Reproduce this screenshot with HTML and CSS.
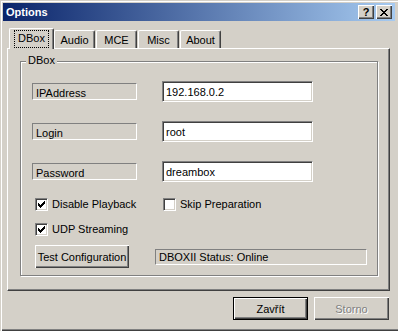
FILE: index.html
```html
<!DOCTYPE html>
<html lang="en">
<head>
    <meta charset="UTF-8">
    <title>Options</title>
    <link rel="stylesheet" href="styles.css">
</head>
<body>

    <div class="window">
        <div class="titlebar">
            <span class="title">Options</span>
            <div class="caption-buttons">
                <span class="caption-btn help">?</span>
                <span class="caption-btn">
                    <svg width="8" height="7" viewBox="0 0 8 7" shape-rendering="crispEdges">
                        <path fill="#000" d="M0 0h2v1H0z M6 0h2v1H6z M1 1h2v1H1z M5 1h2v1H5z M2 2h4v1H2z M3 3h2v1H3z M2 4h4v1H2z M1 5h2v1H1z M5 5h2v1H5z M0 6h2v1H0z M6 6h2v1H6z"/>
                    </svg>
                </span>
            </div>
        </div>

        <div class="content">
            <div class="tabs">
                <div class="tab active"><span class="focus">DBox</span></div>
                <div class="tab">Audio</div>
                <div class="tab">MCE</div>
                <div class="tab">Misc</div>
                <div class="tab">About</div>
            </div>

            <div class="panel">
                <div class="group">
                    <span class="group-title">DBox</span>

                    <div class="field-row">
                        <div class="static">IPAddress</div>
                        <div class="edit">192.168.0.2</div>
                    </div>
                    <div class="field-row">
                        <div class="static">Login</div>
                        <div class="edit">root</div>
                    </div>
                    <div class="field-row">
                        <div class="static">Password</div>
                        <div class="edit">dreambox</div>
                    </div>

                    <div class="check-row first">
                        <label class="check wide">
                            <span class="box">
                                <svg width="7" height="7" viewBox="0 0 7 7" shape-rendering="crispEdges">
                                    <path fill="#000" d="M6 0h1v1H6z M5 1h2v1H5z M0 2h1v1H0z M4 2h3v1H4z M0 3h2v1H0z M3 3h3v1H3z M0 4h5v1H0z M1 5h3v1H1z M2 6h1v1H2z"/>
                                </svg>
                            </span>
                            Disable Playback
                        </label>
                        <label class="check">
                            <span class="box"></span>
                            Skip Preparation
                        </label>
                    </div>
                    <div class="check-row">
                        <label class="check">
                            <span class="box">
                                <svg width="7" height="7" viewBox="0 0 7 7" shape-rendering="crispEdges">
                                    <path fill="#000" d="M6 0h1v1H6z M5 1h2v1H5z M0 2h1v1H0z M4 2h3v1H4z M0 3h2v1H0z M3 3h3v1H3z M0 4h5v1H0z M1 5h3v1H1z M2 6h1v1H2z"/>
                                </svg>
                            </span>
                            UDP Streaming
                        </label>
                    </div>

                    <div class="status-row">
                        <button class="btn test">Test Configuration</button>
                        <div class="status">DBOXII Status: Online</div>
                    </div>
                </div>
            </div>

            <div class="actions">
                <button class="btn default">Zavřít</button>
                <button class="btn disabled">Storno</button>
            </div>
        </div>
    </div>

</body>
</html>
```

FILE: styles.css
```css
body {
    margin: 0;
    background: #d4d0c8;
    font-family: 'Liberation Sans', Arial, sans-serif;
    font-size: 11px;
    color: #000;
}

.window {
    width: 398px;
    height: 331px;
    box-sizing: border-box;
    padding: 3px 3px 0 3px;
    background: #d4d0c8;
    box-shadow: inset 1px 1px 0 #d4d0c8, inset 2px 2px 0 #fff, inset 0 -1px 0 #404040, inset 0 -2px 0 #808080;
}

/* title bar */
.titlebar {
    height: 18px;
    display: flex;
    align-items: center;
    justify-content: space-between;
    padding: 0 3px 0 3px;
    background: linear-gradient(to right, #0a246a, #a6caf0);
}

.title {
    color: #fff;
    font-weight: bold;
    font-size: 11px;
}

.caption-buttons {
    display: flex;
    gap: 2px;
}

.caption-btn {
    width: 16px;
    height: 14px;
    box-sizing: border-box;
    display: flex;
    align-items: center;
    justify-content: center;
    background: #d4d0c8;
    box-shadow: inset 1px 1px 0 #fff, inset -1px -1px 0 #404040, inset -2px -2px 0 #808080;
}

.caption-btn.help {
    font-weight: bold;
    font-size: 11px;
    line-height: 14px;
}

/* tabs */
.content {
    padding: 7px 5px 0 4px;
}

.tabs {
    display: flex;
    align-items: flex-end;
    height: 20px;
    padding-left: 2px;
}

.tab {
    width: 41px;
    height: 18px;
    box-sizing: border-box;
    margin-right: 1px;
    padding-top: 3px;
    text-align: center;
    line-height: 13px;
    border-top: 1px solid #fff;
    border-left: 1px solid #fff;
    border-right: 1px solid #404040;
    border-radius: 2px 2px 0 0;
    box-shadow: inset -1px 0 0 #808080;
}

.tab.active {
    width: 45px;
    height: 21px;
    margin-bottom: -1px;
    margin-right: 0;
    padding-top: 2px;
    position: relative;
    z-index: 1;
    background: #d4d0c8;
}

.focus {
    display: inline-block;
    padding: 1px 3px 2px 3px;
    outline: 1px dotted #000;
}

.panel {
    height: 243px;
    box-sizing: border-box;
    border-top: 1px solid #fff;
    border-left: 1px solid #fff;
    border-right: 1px solid #404040;
    border-bottom: 1px solid #404040;
    box-shadow: inset -1px -1px 0 #808080;
    padding: 12px 11px 0 12px;
}

/* group box */
.group {
    display: flex;
    flex-direction: column;
    border: 1px solid #808080;
    box-shadow: inset 1px 1px 0 #fff, 1px 1px 0 #fff;
    padding: 0 0 7px 11px;
}

.group-title {
    align-self: flex-start;
    margin: -8px 0 0 -6px;
    padding: 0 2px;
    line-height: 13px;
    background: #d4d0c8;
}

.field-row {
    display: flex;
    align-items: center;
    gap: 25px;
    height: 21px;
    margin-top: 19px;
}

.group-title + .field-row {
    margin-top: 14px;
}

.static {
    width: 105px;
    height: 17px;
    box-sizing: border-box;
    padding: 3px 0 0 3px;
    line-height: 13px;
    border-top: 1px solid #808080;
    border-left: 1px solid #808080;
    border-right: 1px solid #fff;
    border-bottom: 1px solid #fff;
}

.edit {
    width: 151px;
    height: 21px;
    box-sizing: border-box;
    padding: 4px 0 0 3px;
    line-height: 13px;
    background: #fff;
    border-top: 1px solid #808080;
    border-left: 1px solid #808080;
    border-right: 1px solid #fff;
    border-bottom: 1px solid #fff;
    box-shadow: inset 1px 1px 0 #404040, inset -1px -1px 0 #d4d0c8;
}

/* checkboxes */
.check-row {
    display: flex;
    height: 13px;
    margin: 12px 0 0 3px;
}

.check-row.first {
    margin-top: 16px;
}

.check {
    display: flex;
    align-items: center;
    gap: 4px;
    line-height: 13px;
}

.check.wide {
    width: 128px;
}

.box {
    width: 13px;
    height: 13px;
    box-sizing: border-box;
    display: flex;
    align-items: center;
    justify-content: center;
    background: #fff;
    border-top: 1px solid #808080;
    border-left: 1px solid #808080;
    border-right: 1px solid #fff;
    border-bottom: 1px solid #fff;
    box-shadow: inset 1px 1px 0 #404040, inset -1px -1px 0 #d4d0c8;
}

/* buttons */
.btn {
    height: 23px;
    box-sizing: border-box;
    padding: 0;
    font-family: inherit;
    font-size: 11px;
    color: #000;
    background: #d4d0c8;
    border: none;
    box-shadow: inset 1px 1px 0 #fff, inset -1px -1px 0 #404040, inset -2px -2px 0 #808080;
}

.status-row {
    display: flex;
    align-items: center;
    margin: 9px 0 0 3px;
}

.btn.test {
    width: 94px;
}

.status {
    width: 212px;
    height: 16px;
    box-sizing: border-box;
    margin-left: 26px;
    padding: 1px 0 0 3px;
    line-height: 13px;
    border-top: 1px solid #808080;
    border-left: 1px solid #808080;
    border-right: 1px solid #fff;
    border-bottom: 1px solid #fff;
}

.actions {
    display: flex;
    justify-content: flex-end;
    gap: 6px;
    margin: 6px 1px 0 0;
}

.actions .btn {
    width: 75px;
}

.btn.default {
    border: 1px solid #000;
    box-shadow: inset 1px 1px 0 #fff, inset -1px -1px 0 #404040, inset -2px -2px 0 #808080;
}

.btn.disabled {
    color: #808080;
    text-shadow: 1px 1px 0 #fff;
}
```
